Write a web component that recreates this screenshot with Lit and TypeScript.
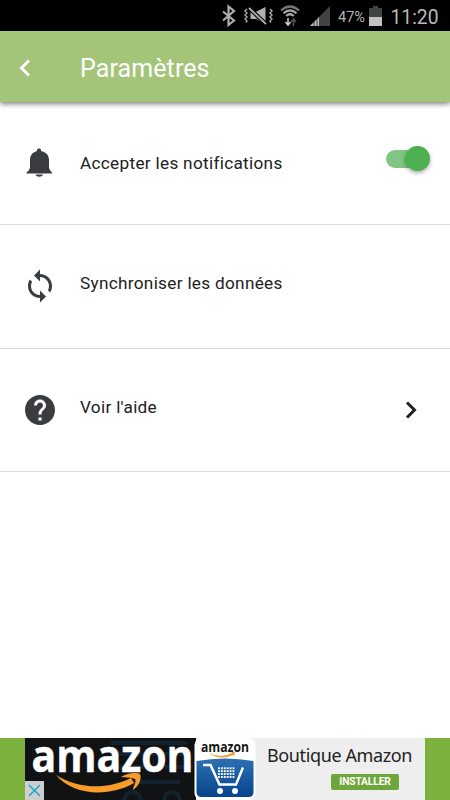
import { LitElement, html, css, svg } from "lit";
import { customElement } from "lit/decorators.js";

const chevron = (d: string, cls: string) => html`<svg class=${cls} width="12" height="18" viewBox="0 0 12 18"><path d=${d} fill="none" stroke="currentColor" stroke-width="3" /></svg>`;

@customElement("status-bar")
class StatusBar extends LitElement {
  static styles = css`
    :host { display: block; height: 31px; background: #000; }
    svg { display: block; }
    text { font-family: Roboto, sans-serif; }
  `;
  render() {
    return html`<svg width="450" height="31" viewBox="0 0 450 31">
      <path d="M223 11.500L234 20.500L228.500 25V6.500L234 11L223 20.500" fill="none" stroke="#aeb0b0" stroke-width="2.200" />
      <g fill="none" stroke="#a9abab" stroke-width="1.400">
        <path d="M247 9l-2 2 2 2-2 2 2 2-2 2 2 2-1 1.500M270 9l2 2-2 2 2 2-2 2 2 2-2 2 1 1.500" />
      </g>
      <path d="M250.500 12h5l10-5v17.500l-9-5.500h-6z" fill="#aeb0b0" />
      <path d="M249 8l17 16" stroke="#000" stroke-width="4" /><path d="M249 8l17 16" stroke="#aeb0b0" stroke-width="1.800" />
      <g fill="none" stroke="#a9abab" stroke-width="2.200">
        <path d="M281 10.500q9-8 18 0" stroke="#737575" /><path d="M283.500 13.300q6.500-6 13 0M286.200 16q3.800-3.500 7.600 0" />
      </g>
      <path d="M288 18v7M285.500 22l2.500 3 2.500-3" fill="none" stroke="#d0d2d2" stroke-width="1.500" />
      <path d="M293.500 26v-6M291 22l2.500-3 2.500 3" fill="none" stroke="#555" stroke-width="1.500" />
      <path d="M310 26L330 6v20z" fill="#414343" /><path d="M310 26l9-9v9z" fill="#bfc1c1" />
      <path d="M314 21v5M317 18v8" stroke="#111" stroke-width=".8" />
      <text x="338" y="21.500" font-size="14.500" fill="#b2b4b4" textLength="27" lengthAdjust="spacingAndGlyphs">47%</text>
      <path d="M369 8h4V6h5v2h4v9h-13z" fill="#414343" /><path d="M369 17h13v9h-13z" fill="#c0c2c2" />
      <text x="390.500" y="24" font-size="20.500" fill="#b7b9b9" textLength="48" lengthAdjust="spacingAndGlyphs">11:20</text>
    </svg>`;
  }
}

@customElement("ad-banner")
class AdBanner extends LitElement {
  static styles = css`
    :host { display: flex; height: 62px; background: #7cb13d; padding: 0 25px; box-sizing: border-box; }
    svg { display: block; flex: none; overflow: visible; }
    .logo { font: 700 40px "Open Sans", sans-serif; }
    .small { font: 700 15px "Open Sans", sans-serif; }
    .offer { flex: 1; background: #eee; box-sizing: border-box; padding: 6px 0 0 10px; }
    .name { font: 18px/23px "Noto Sans", sans-serif; color: #222; white-space: nowrap; letter-spacing: -0.38px; }
    .install { margin: 7px 0 0 64px; width: 68px; height: 16px; border-radius: 2px; background: #6da63b; color: #fff; font: 700 10.200px/16px Roboto, sans-serif; text-align: center; letter-spacing: -.1px; }
  `;
  render() {
    const dots: unknown[] = [];
    for (let r = 0; r < 4; r++) for (let c = 0; c < 6; c++)
      dots.push(svg`<rect x=${193 + c * 2.9} y=${29.3 + r * 2.9} width="1.900" height="1.900" />`);
    return html`<svg width="232" height="62" viewBox="0 0 232 62">
        <defs><linearGradient id="blue" x2="0" y2="1"><stop stop-color="#2c70b3" /><stop offset="1" stop-color="#07448b" /></linearGradient></defs>
        <path d="M0 0h171v62H0z" fill="#111214" /><path d="M171 0h61v62h-61z" fill="#eee" />
        <g fill="none" stroke="#10232e" stroke-width="4"><path d="M86 5h76M88 16h74M88 29h80M105 44h50" /><path d="M99.500 62a8 8 0 0 1 16 0M139 62a8 8 0 0 1 16 0" /></g>
        <text class="logo" x="6.500" y="30.300" transform="scale(1 1.120)" fill="#fff" stroke="#fff" stroke-width=".4" textLength="162" lengthAdjust="spacingAndGlyphs">amazon</text>
        <path d="M31 37c23 14 50 15 75 3l3 5c-26 15-62 12-78-8z" fill="#f79c28" />
        <path d="M96 39c6-4 15-5 19-3 2 5-1 12-7 16 0-4 4-8 2-11-4-2-9-1-14-2z" fill="#f79c28" />
        <rect x="0" y="43" width="19" height="19" fill="#cecece" /><path d="M4 47l11 11M15 47L4 58" stroke="#1ca5cf" stroke-width="1.500" />
        <rect x="169.500" y="0" width="61" height="62" rx="7" fill="#fff" />
        <path d="M171.500 23q29-5 57 0v31q0 5-5 5h-47q-5 0-5-5z" fill="url(#blue)" />
        <text class="small" x="176" y="14" fill="#151515" textLength="48" lengthAdjust="spacingAndGlyphs">amazon</text>
        <path d="M184 15q12 6 23 0l-1-1 4 0-1 4-1-1q-13 6-24-2" fill="#f29a30" />
        <path d="M178 27h7.500l9 19.500h16.500l7-17" fill="none" stroke="#fff" stroke-width="2.500" />
        <g fill="#fff">${dots}<circle cx="195" cy="53" r="3" /><circle cx="210" cy="53" r="3" /></g>
      </svg>
      <div class="offer"><div class="name">Boutique Amazon</div><div class="install">INSTALLER</div></div>`;
  }
}

@customElement("app-root")
class AppRoot extends LitElement {
  static styles = css`
    :host { display: flex; flex-direction: column; width: 450px; height: 800px; overflow: hidden; background: #fff; font-family: Roboto, sans-serif; color: #212121; }
    .bar { height: 71px; flex: none; display: flex; align-items: center; background: #a4c579; color: #fff; box-shadow: 0 2px 5px rgba(0,0,0,.5); box-sizing: border-box; padding: 3px 0 0 19px; position: relative; }
    .bar .back { flex: none; width: 12px; margin-right: 49px; }
    h1 { font-size: 25px; font-weight: 400; margin: 0; letter-spacing: .1px; }
    .row { box-sizing: border-box; border-bottom: 1px solid #d9d9d9; display: flex; align-items: flex-start; flex: none; height: 124px; padding: 43px 20px 0 22px; }
    .row.first { height: 123px; padding-top: 44px; }
    .row.last { height: 123px; }
    .icon { display: block; width: 36px; height: 36px; fill: #393d3f; flex: none; }
    .label { flex: 1; margin: 5px 0 0 22px; font-size: 17.200px; line-height: 20px; letter-spacing: .3px; }
    .first .label { margin-top: 7px; }
    .first .icon { margin-top: 1px; }
    .toggle { width: 44px; height: 26px; position: relative; }
    .track { position: absolute; left: 0; top: 4px; width: 38px; height: 18px; border-radius: 9px; background: #7fc682; }
    .knob { position: absolute; right: 0; top: 0; width: 25px; height: 25px; border-radius: 50%; background: #4caf50; box-shadow: 0 2px 4px rgba(0,0,0,.35); }
    .next { margin: 9px 13px 0 0; }
    .space { flex: 1; }
  `;
  render() {
    return html`<status-bar></status-bar>
      <div class="bar">${chevron("M10 1.500L2.500 9l7.500 7.500", "back")}<h1>Paramètres</h1></div>
      <div class="row first">
        <svg class="icon" viewBox="0 0 36 36"><path d="M4.500 25.500c2-1.500 3.500-3 3.500-6V13c0-5 3-8 7-9V3c0-2 4-2 4 0v1c5 1 8 4 8 9v6.500c0 3 1.500 4.500 3 6v1H4.500zM13.500 27.500h7.500c-1 3-6.500 3-7.500 0z" /></svg>
        <div class="label">Accepter les notifications</div>
        <div class="toggle"><div class="track"></div><div class="knob"></div></div>
      </div>
      <div class="row">
        <svg class="icon" viewBox="0 0 24 24"><path d="M12 4V1L8 5l4 4V6c3.310 0 6 2.690 6 6 0 1.010-.25 1.970-.7 2.800l1.460 1.460C19.540 15.030 20 13.570 20 12c0-4.420-3.580-8-8-8zm0 14c-3.310 0-6-2.690-6-6 0-1.010.25-1.970.7-2.800L5.240 7.740C4.460 8.970 4 10.430 4 12c0 4.420 3.580 8 8 8v3l4-4-4-4v3z" /></svg>
        <div class="label">Synchroniser les données</div>
      </div>
      <div class="row last">
        <svg class="icon" viewBox="0 0 24 24"><path d="M12 2C6.480 2 2 6.480 2 12s4.480 10 10 10 10-4.480 10-10S17.520 2 12 2zm1 17h-2v-2h2v2zm2.070-7.750l-.9.920C13.450 12.900 13 13.500 13 15h-2v-.5c0-1.100.45-2.100 1.170-2.830l1.240-1.260c.37-.36.59-.86.59-1.410 0-1.100-.9-2-2-2s-2 .9-2 2H8c0-2.210 1.790-4 4-4s4 1.790 4 4c0 .88-.36 1.680-.93 2.250z" /></svg>
        <div class="label">Voir l'aide</div>
        ${chevron("M2 1.500L9.500 9L2 16.500", "next")}
      </div>
      <div class="space"></div>
      <ad-banner></ad-banner>`;
  }
}
